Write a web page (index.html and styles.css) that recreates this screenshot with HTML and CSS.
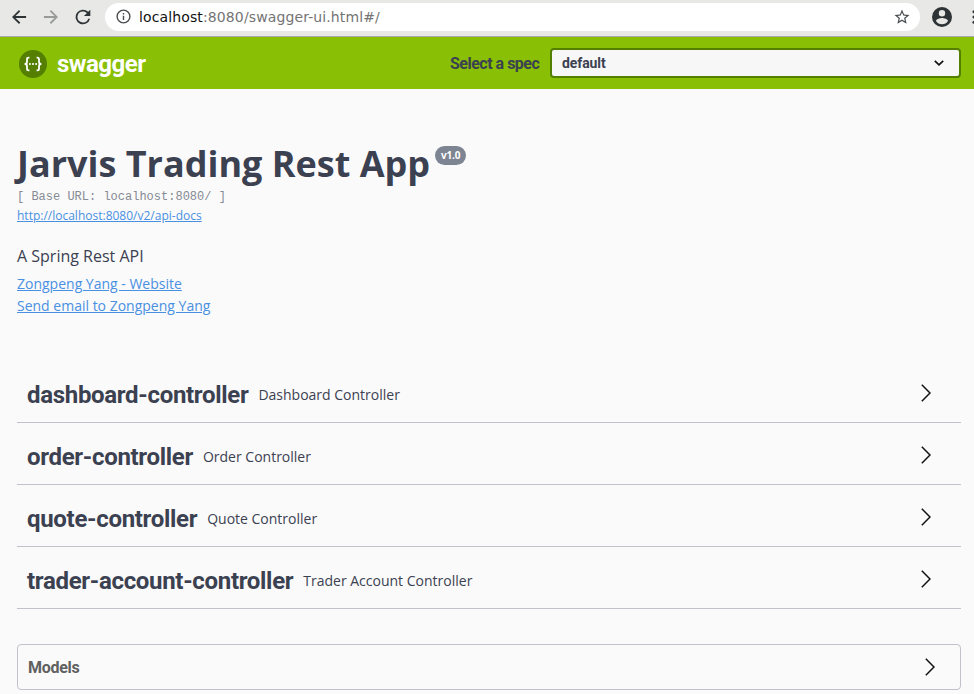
FILE: index.html
```html
<!DOCTYPE html>
<html lang="en">
<head>
<meta charset="utf-8">
<title>Swagger UI</title>
<link rel="stylesheet" href="styles.css">
</head>
<body>
<div class="browser">
  <svg class="nav" viewBox="0 0 24 24"><path d="M20.5 10.8H7.8l5.6-5.4L12 3.6 3.6 12l8.4 8.4 1.6-1.8-5.8-5.4h12.7z"/></svg>
  <svg class="nav off" viewBox="0 0 24 24"><path d="M3.5 10.8h12.7l-5.6-5.4L12 3.6l8.4 8.4-8.4 8.4-1.6-1.8 5.8-5.4H3.5z"/></svg>
  <svg class="nav reload" viewBox="0 0 24 24"><path d="M17.65 6.35A8 8 0 1 0 19.73 14h-2.08A6 6 0 1 1 12 6c1.66 0 3.14.69 4.22 1.78L13 11h7V4z"/></svg>
  <div class="address">
    <svg class="info-icon" viewBox="0 0 24 24"><path d="M11 17h2v-6h-2v6zm0-8h2V7h-2v2zm1-7a10 10 0 1 0 0 20 10 10 0 0 0 0-20zm0 18a8 8 0 1 1 0-16 8 8 0 0 1 0 16z"/></svg>
    <span class="url"><b>localhost</b>:8080/swagger-ui.html#/</span>
    <svg class="star" viewBox="0 0 24 24"><path d="M22 9.24l-7.19-.62L12 2 9.19 8.63 2 9.24l5.46 4.73L5.82 21 12 17.27 18.18 21l-1.63-7.03zM12 15.4l-3.76 2.27 1-4.28-3.32-2.88 4.38-.38L12 6.1l1.71 4.04 4.38.38-3.32 2.88 1 4.28z"/></svg>
  </div>
  <svg class="profile" viewBox="0 0 24 24"><path d="M12 2a10 10 0 1 0 0 20 10 10 0 0 0 0-20zm0 3a3.2 3.2 0 1 1 0 6.4A3.2 3.2 0 0 1 12 5zm0 14.2a7.2 7.2 0 0 1-6-3.2c.03-2 4-3.1 6-3.1s5.97 1.1 6 3.1a7.2 7.2 0 0 1-6 3.2z"/></svg>
  <svg class="dots" viewBox="0 0 4 16"><circle cx="2" cy="2" r="1.8"/><circle cx="2" cy="8" r="1.8"/><circle cx="2" cy="14" r="1.8"/></svg>
</div>
<header class="topbar">
  <svg class="logo" viewBox="0 0 28 28"><circle cx="14" cy="14" r="14"/><path d="M10.4 7.6H9.6Q8 7.6 8 9.2v2.5Q8 14 5.6 14q2.4 0 2.4 2.3v2.5q0 1.6 1.6 1.6h.8M17.6 7.6h.8q1.6 0 1.6 1.6v2.5q0 2.3 2.4 2.3-2.4 0-2.4 2.3v2.5q0 1.6-1.6 1.6h-.8"/><g><circle cx="10.9" cy="14" r="1.05"/><circle cx="14" cy="14" r="1.05"/><circle cx="17.1" cy="14" r="1.05"/></g></svg>
  <span class="brand">swagger</span>
  <span class="spec-label">Select a spec</span>
  <div class="select"><span>default</span><svg viewBox="0 0 10 6"><path d="M.8.8 5 4.8 9.2.8"/></svg></div>
</header>
<main>
  <section class="info">
    <div class="heading"><h1>Jarvis Trading Rest App</h1><span class="version">v1.0</span></div>
    <pre>[ Base URL: localhost:8080/ ]</pre>
    <a class="docs" href="#">http://localhost:8080/v2/api-docs</a>
    <p>A Spring Rest API</p>
    <a href="#">Zongpeng Yang - Website</a>
    <a href="#">Send email to Zongpeng Yang</a>
  </section>
  <section class="tags">
    <div class="tag"><h2>dashboard-controller</h2><small>Dashboard Controller</small><svg class="arrow" viewBox="0 0 10 18"><path d="M.8.8 9 9 .8 17.2"/></svg></div>
    <div class="tag"><h2>order-controller</h2><small>Order Controller</small><svg class="arrow" viewBox="0 0 10 18"><path d="M.8.8 9 9 .8 17.2"/></svg></div>
    <div class="tag"><h2>quote-controller</h2><small>Quote Controller</small><svg class="arrow" viewBox="0 0 10 18"><path d="M.8.8 9 9 .8 17.2"/></svg></div>
    <div class="tag"><h2>trader-account-controller</h2><small>Trader Account Controller</small><svg class="arrow" viewBox="0 0 10 18"><path d="M.8.8 9 9 .8 17.2"/></svg></div>
  </section>
  <section class="models"><h3>Models</h3><svg class="arrow" viewBox="0 0 10 18"><path d="M.8.8 9 9 .8 17.2"/></svg></section>
</main>
</body>
</html>
```
FILE: styles.css
```css
* { box-sizing: border-box; }
body { margin: 0; height: 694px; overflow: hidden; background: #fafafa; color: #3b4151; font-family: "Open Sans", sans-serif; }
svg { display: block; flex: none; }
h1, h2, h3, p, pre { margin: 0; }
.browser { display: flex; align-items: center; height: 37px; padding: 0 0 3px 9px; background: #e8e8e7; border-bottom: 1px solid #a9a9a8; overflow: hidden; }
.nav { width: 20px; height: 20px; margin-right: 12px; fill: #2e3436; }
.nav.off { fill: #999b9a; }
.nav.reload { width: 22px; height: 22px; margin: 0 11px 0 -1px; }
.address { display: flex; align-items: center; flex: none; width: 815px; height: 28px; padding: 0 9px 0 10px; border-radius: 14px; background: #fff; }
.info-icon { width: 17px; height: 17px; fill: #4a4d50; }
.url { flex: 1; margin-left: 7px; font: 14px/20px "DejaVu Sans", sans-serif; letter-spacing: .12px; color: #747474; white-space: nowrap; }
.url b { font-weight: 400; color: #111; }
.star { width: 18px; height: 18px; fill: #4a4d50; }
.profile { width: 24px; height: 24px; margin-left: 10px; fill: #2e3436; }
.dots { width: 4px; height: 14px; margin-left: 18px; fill: #2e3436; }
.topbar { display: flex; align-items: center; height: 52px; padding: 0 13px 0 19px; background: #89bf04; font-family: Roboto, sans-serif; font-weight: 700; }
.logo { width: 28px; height: 28px; margin-top: 2px; fill: #547f00; }
.logo path { fill: none; stroke: #fff; stroke-width: 1.8; }
.logo g { fill: #fff; }
.brand { margin: 2px 0 0 10px; width: 90px; font-size: 24px; line-height: 30px; letter-spacing: -.5px; color: #fff; }
.spec-label { margin-left: auto; width: 100px; font-size: 16px; letter-spacing: -.5px; white-space: nowrap; }
.select { display: flex; align-items: center; justify-content: space-between; width: 411px; height: 30px; padding: 0 15px 0 10px; border: 2px solid #547f00; border-radius: 4px; background: #f7f7f7; font-size: 14px; letter-spacing: -.1px; }
.select svg { width: 10px; height: 6px; fill: none; stroke: #111; stroke-width: 1.7; }
main { padding: 50px 13px 0 17px; }
.info { height: 229px; }
.heading { display: flex; height: 50px; }
h1 { font-size: 36px; line-height: 49px; white-space: nowrap; }
.version { height: 19px; margin: 7px 0 0 5px; padding: 0 6px; border-radius: 10px; background: #7d8492; color: #fff; font-size: 10px; line-height: 19px; font-weight: 700; letter-spacing: -.2px; }
pre { padding-top: 1px; font: 12px/14px "Liberation Mono", monospace; color: #858a94; }
.info a { display: table; color: #4990e2; font-size: 14px; line-height: 22px; text-decoration: underline; }
.info .docs { font-size: 12px; line-height: 24px; }
.info p { margin: 17px 0 6px; font-size: 16px; line-height: 22px; }
.tag { display: flex; align-items: center; height: 62px; padding: 7px 30px 0 10px; border-bottom: 1px solid #c0c1ca; }
.tag:first-child { height: 55px; padding-top: 0; }
h2 { font: 700 24px/30px Roboto, sans-serif; letter-spacing: -.31px; white-space: nowrap; }
small { margin-left: 10px; font-size: 14px; line-height: 20px; }
.arrow { width: 10px; height: 18px; margin-left: auto; fill: none; stroke: #111; stroke-width: 1.5; }
.tag .arrow { margin-bottom: 4px; }
.models { display: flex; align-items: center; height: 46px; margin-top: 35px; padding: 0 25px 0 10px; border: 1px solid #c0c1ca; border-radius: 4px; }
h3 { padding-top: 2px; font: 700 16px/20px Roboto, sans-serif; letter-spacing: -.3px; color: #606060; }
```
